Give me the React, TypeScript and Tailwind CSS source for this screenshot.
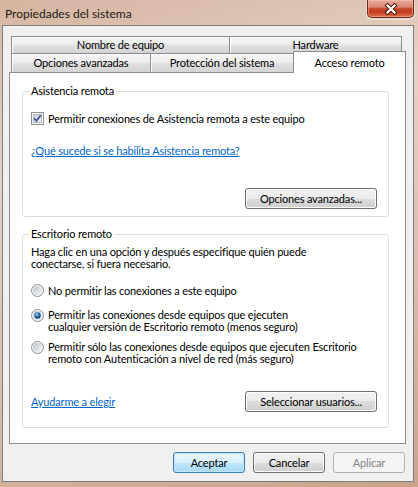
import type { ReactNode } from 'react'

function CloseButton() {
  return (
    <div className="mr-[4px] flex h-[18px] w-[47px] items-center justify-center rounded-b-[5px] border border-t-0 border-[#6a2819] bg-[linear-gradient(to_bottom,#e8ab9b_0%,#d98a75_40%,#c64528_52%,#c23c1f_70%,#df6e4b_100%)] shadow-[inset_0_0_0_1px_rgba(255,200,180,0.45),0_1px_0_1px_rgba(255,255,255,0.35)]">
      <svg width="14" height="12" viewBox="0 0 14 12">
        <path d="M3.5 2.5 L10.5 9.5 M10.5 2.5 L3.5 9.5" stroke="#4a1a10" strokeWidth="4.2" strokeLinecap="square" />
        <path d="M3.5 2.5 L10.5 9.5 M10.5 2.5 L3.5 9.5" stroke="#ffffff" strokeWidth="2.2" strokeLinecap="square" />
      </svg>
    </div>
  )
}

function Tab({ children, className }: { children: ReactNode; className: string }) {
  return (
    <div
      className={`flex items-center justify-center border-[#898c95] bg-[linear-gradient(to_bottom,#f5f5f5_0%,#eeeeee_45%,#dedede_55%,#d4d4d4_100%)] shadow-[inset_1px_1px_0_#fcfcfc] ${className}`}
    >
      {children}
    </div>
  )
}

function Button({ children, kind = 'normal', className = '' }: { children: ReactNode; kind?: 'normal' | 'default' | 'disabled'; className?: string }) {
  const look =
    kind === 'default'
      ? 'border-[#3c7fb1] bg-[linear-gradient(to_bottom,#eaf6fd_0%,#d9f0fc_50%,#bee6fd_50%,#a7d9f5_100%)] shadow-[inset_0_0_0_1px_#c4e5f6]'
      : kind === 'disabled'
        ? 'border-[#adb2b5] bg-[#f4f4f4] text-[#838383]'
        : 'border-[#707070] bg-[linear-gradient(to_bottom,#f2f2f2_0%,#ebebeb_50%,#dddddd_50%,#cfcfcf_100%)] shadow-[inset_0_0_0_1px_#fcfcfc]'
  return (
    <div className={`flex h-[21px] items-center justify-center rounded-[3px] border ${look} ${className}`}>
      {children}
    </div>
  )
}

function Checkbox() {
  return (
    <svg width="13" height="13" viewBox="0 0 13 13" className="shrink-0">
      <defs>
        <linearGradient id="cbIn" x1="0" y1="0" x2="1" y2="1">
          <stop offset="0" stopColor="#c9ced6" />
          <stop offset="1" stopColor="#f3f4f6" />
        </linearGradient>
      </defs>
      <rect x="0.5" y="0.5" width="12" height="12" fill="#f6f6f6" stroke="#8e8f8f" />
      <rect x="2.5" y="2.5" width="8" height="8" fill="url(#cbIn)" stroke="#b3b8bf" />
      <path d="M3.2 6.3 L5.4 8.8 L9.8 3.2" fill="none" stroke="#3f5596" strokeWidth="1.7" />
    </svg>
  )
}

function Radio({ checked = false, id }: { checked?: boolean; id: string }) {
  return (
    <svg width="13" height="13" viewBox="0 0 13 13" className="shrink-0">
      <defs>
        <linearGradient id={`rb${id}`} x1="0" y1="0" x2="1" y2="1">
          <stop offset="0" stopColor="#bfc4ca" />
          <stop offset="1" stopColor="#f5f5f5" />
        </linearGradient>
        <radialGradient id={`rd${id}`} cx="0.4" cy="0.35" r="0.65">
          <stop offset="0" stopColor="#b6e0fb" />
          <stop offset="0.45" stopColor="#2c7dbc" />
          <stop offset="1" stopColor="#0d3c63" />
        </radialGradient>
      </defs>
      <circle cx="6.5" cy="6.5" r="6" fill="#f4f4f4" stroke="#8c8e90" />
      <circle cx="6.5" cy="6.5" r="4.5" fill={`url(#rb${id})`} />
      {checked && <circle cx="6.5" cy="6.5" r="3.2" fill={`url(#rd${id})`} />}
    </svg>
  )
}

export default function App() {
  return (
    <div className="flex h-[487px] w-[418px] flex-col bg-[linear-gradient(165deg,#d5b5a0_0%,#e6d2c4_30%,#dcc0ad_60%,#caa48d_100%)] font-['Lato','Liberation_Sans',sans-serif] text-[11px] leading-[12px] tracking-[-0.17px] text-black">
      {/* Title bar */}
      <div className="flex h-[25px] shrink-0 items-start justify-between">
        <span className="ml-[5px] mt-[6px] text-[12px] leading-[15px] tracking-normal text-[#1b1b1b]">Propiedades del sistema</span>
        <CloseButton />
      </div>

      {/* Client area */}
      <div className="mb-[5px] ml-[2px] mr-[4px] flex flex-1 flex-col border border-[#7d7d7d] bg-[#f0f0f0]">
        <div className="ml-[6px] mt-[10px] w-[397px]">
          {/* Tab rows */}
          <div className="flex h-[17px] pl-[2px]">
            <Tab className="w-[218px] border-l border-t">Nombre de equipo</Tab>
            <Tab className="w-[173px] border-x border-t">Hardware</Tab>
          </div>
          <div className="flex h-[19px] items-end pl-[2px]">
            <Tab className="h-[19px] w-[139px] border-l border-t">Opciones avanzadas</Tab>
            <Tab className="h-[19px] w-[143px] border-l border-t">Protección del sistema</Tab>
            <div className="relative z-10 -mb-px flex h-[22px] w-[113px] items-center justify-center border-x border-t border-[#898c95] bg-white">
              Acceso remoto
            </div>
          </div>

          {/* Tab panel */}
          <div className="h-[372px] border border-[#898c95] bg-white pl-[12px]">
            <fieldset className="mt-[12px] flex w-[367px] flex-col rounded-[3px] border border-[#d5dfe5] px-[8px] pb-[7px]">
              <legend className="-ml-[2px] px-[2px]">Asistencia remota</legend>
              <div className="mt-[15px] flex h-[13px] items-center gap-[4px]">
                <Checkbox />
                <span>Permitir conexiones de Asistencia remota a este equipo</span>
              </div>
              <a className="mt-[20px] self-start text-[#0066cc] underline">¿Qué sucede si se habilita Asistencia remota?</a>
              <Button className="mr-[3px] mt-[31px] w-[132px] self-end">Opciones avanzadas...</Button>
            </fieldset>

            <fieldset className="mt-[11px] flex w-[367px] flex-col rounded-[3px] border border-[#d5dfe5] px-[8px] pb-[15px]">
              <legend className="-ml-[2px] px-[2px]">Escritorio remoto</legend>
              <p className="mt-[6px]">
                Haga clic en una opción y después especifique quién puede
                <br />
                conectarse, si fuera necesario.
              </p>
              <div className="mt-[14px] flex h-[13px] items-center gap-[4px]">
                <Radio id="1" />
                <span>No permitir las conexiones a este equipo</span>
              </div>
              <div className="mt-[12px] flex items-start gap-[4px]">
                <Radio id="2" checked />
                <span>
                  Permitir las conexiones desde equipos que ejecuten
                  <br />
                  cualquier versión de Escritorio remoto (menos seguro)
                </span>
              </div>
              <div className="mt-[8px] flex items-start gap-[4px]">
                <Radio id="3" />
                <span>
                  Permitir sólo las conexiones desde equipos que ejecuten Escritorio
                  <br />
                  remoto con Autenticación a nivel de red (más seguro)
                </span>
              </div>
              <div className="mt-[26px] flex items-center justify-between">
                <a className="text-[#0066cc] underline">Ayudarme a elegir</a>
                <Button className="mr-[3px] w-[132px]">Seleccionar usuarios...</Button>
              </div>
            </fieldset>
          </div>
        </div>

        {/* Dialog buttons */}
        <div className="mr-[8px] mt-[8px] flex justify-end gap-[8px]">
          <Button kind="default" className="w-[72px]">Aceptar</Button>
          <Button className="w-[72px]">Cancelar</Button>
          <Button kind="disabled" className="w-[72px]">Aplicar</Button>
        </div>
      </div>
    </div>
  )
}
